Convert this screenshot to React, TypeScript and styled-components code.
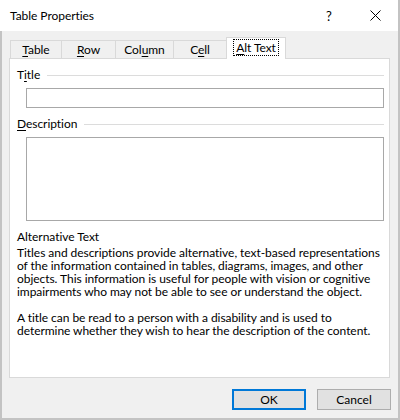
import React from "react";
import styled, { createGlobalStyle } from "styled-components";

const GlobalStyle = createGlobalStyle`
  html, body {
    margin: 0;
    padding: 0;
    background: #ffffff;
  }
  body {
    font-family: Lato, "Liberation Sans", sans-serif;
    font-size: 12px;
    letter-spacing: -0.05px;
    color: #000000;
  }
  * {
    box-sizing: border-box;
  }
`;

const Window = styled.div`
  width: 400px;
  height: 420px;
  display: flex;
  flex-direction: column;
  border-right: 2px solid #c3c3c3;
  background: #ffffff;
`;

const TitleBar = styled.div`
  height: 31px;
  display: flex;
  align-items: center;
  padding-left: 10px;
  background: #ffffff;
`;

const Caption = styled.div`
  flex: 1;
  line-height: 16px;
`;

const HelpButton = styled.div`
  width: 46px;
  text-align: center;
  font-size: 13px;
  line-height: 16px;
`;

const CloseButton = styled.div`
  width: 46px;
  height: 31px;
  display: flex;
  align-items: center;
  justify-content: center;
`;

const Body = styled.div`
  flex: 1;
  display: flex;
  flex-direction: column;
  background: #f0f0f0;
  border-left: 2px solid #c3c3c3;
  border-bottom: 2px solid #c3c3c3;
  padding: 7px 0 0 7px;
`;

const TabStrip = styled.div`
  display: flex;
  align-items: flex-end;
  height: 21px;
  padding-left: 1px;
  position: relative;
  z-index: 1;
`;

const Tab = styled.div<{ $width: number; $active?: boolean }>`
  width: ${(p) => p.$width}px;
  height: ${(p) => (p.$active ? 22 : 19)}px;
  margin-left: -1px;
  display: flex;
  align-items: center;
  justify-content: center;
  border: 1px solid #d9d9d9;
  border-bottom: ${(p) => (p.$active ? "none" : "1px solid #d9d9d9")};
  background: ${(p) => (p.$active ? "#ffffff" : "#f0f0f0")};
  line-height: 15px;
  padding-bottom: ${(p) => (p.$active ? 3 : 1)}px;
  &:first-child {
    margin-left: 0;
  }
`;

const FocusRing = styled.span`
  outline: 1px dotted #000000;
  outline-offset: 0;
  padding: 0 2px;
  line-height: 15px;
`;

const Key = styled.span`
  text-decoration: underline;
  text-underline-offset: 2px;
`;

const Panel = styled.div`
  width: 381px;
  height: 320px;
  margin-top: -1px;
  background: #ffffff;
  border: 1px solid #d9d9d9;
  padding: 8px 5px 0 7px;
  display: flex;
  flex-direction: column;
`;

const GroupHeader = styled.div`
  display: flex;
  align-items: center;
  height: 16px;
  line-height: 16px;
`;

const GroupRule = styled.div`
  flex: 1;
  height: 1px;
  margin-left: 7px;
  background: #dcdcdc;
`;

const TextField = styled.div<{ $height: number }>`
  height: ${(p) => p.$height}px;
  margin: 5px 0 0 9px;
  border: 1px solid #a8a8a8;
  background: #ffffff;
`;

const Spacer = styled.div<{ $h: number }>`
  height: ${(p) => p.$h}px;
`;

const InfoTitle = styled.div`
  line-height: 13px;
  margin-bottom: 3px;
`;

const InfoText = styled.p`
  margin: 0 0 13px;
  line-height: 13px;
  white-space: nowrap;
`;

const Footer = styled.div`
  display: flex;
  justify-content: flex-end;
  gap: 11px;
  padding: 11px 7px 0 0;
`;

const Button = styled.button<{ $default?: boolean }>`
  width: 74px;
  height: 21px;
  padding: 0;
  font-family: inherit;
  font-size: 12px;
  color: #000000;
  background: #e1e1e1;
  border: ${(p) => (p.$default ? "2px solid #0078d7" : "1px solid #adadad")};
`;

export default function App() {
  return (
    <>
      <GlobalStyle />
      <Window>
        <TitleBar>
          <Caption>Table Properties</Caption>
          <HelpButton>?</HelpButton>
          <CloseButton>
            <svg width="11" height="11" viewBox="0 0 11 11">
              <path d="M0.5 0.5 L10.5 10.5 M10.5 0.5 L0.5 10.5" stroke="#000" strokeWidth="1" />
            </svg>
          </CloseButton>
        </TitleBar>
        <Body>
          <TabStrip>
            <Tab $width={52}>
              <span>
                <Key>T</Key>able
              </span>
            </Tab>
            <Tab $width={55}>
              <span>
                <Key>R</Key>ow
              </span>
            </Tab>
            <Tab $width={59}>
              <span>
                Col<Key>u</Key>mn
              </span>
            </Tab>
            <Tab $width={54}>
              <span>
                C<Key>e</Key>ll
              </span>
            </Tab>
            <Tab $width={60} $active>
              <FocusRing>
                <Key>A</Key>lt Text
              </FocusRing>
            </Tab>
          </TabStrip>
          <Panel>
            <GroupHeader>
              <span>
                T<Key>i</Key>tle
              </span>
              <GroupRule />
            </GroupHeader>
            <TextField $height={20} />
            <Spacer $h={8} />
            <GroupHeader>
              <span>
                <Key>D</Key>escription
              </span>
              <GroupRule />
            </GroupHeader>
            <TextField $height={84} />
            <Spacer $h={9} />
            <InfoTitle>Alternative Text</InfoTitle>
            <InfoText>
              Titles and descriptions provide alternative, text-based representations
              <br />
              of the information contained in tables, diagrams, images, and other
              <br />
              objects. This information is useful for people with vision or cognitive
              <br />
              impairments who may not be able to see or understand the object.
            </InfoText>
            <InfoText>
              A title can be read to a person with a disability and is used to
              <br />
              determine whether they wish to hear the description of the content.
            </InfoText>
          </Panel>
          <Footer>
            <Button $default>OK</Button>
            <Button>Cancel</Button>
          </Footer>
        </Body>
      </Window>
    </>
  );
}
